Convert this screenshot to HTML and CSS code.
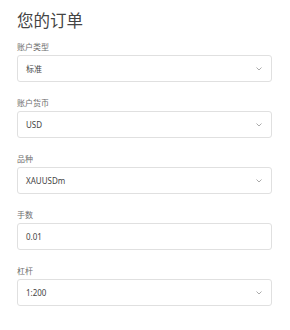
FILE: index.html
```html
<!DOCTYPE html>
<html>
    <head>
        <title>您的订单</title>
        <link rel="stylesheet" href="styles.css">
    </head>
    <body>
        <main class="order">
            <h1 class="title">您的订单</h1>
            <div class="field">
                <p class="label">账户类型</p>
                <div class="box">
                    <span class="value">标准</span>
                    <svg class="chevron" viewBox="0 0 6 4"><path d="M0.5 0.5 L3 3 L5.5 0.5"/></svg>
                </div>
            </div>
            <div class="field">
                <p class="label">账户货币</p>
                <div class="box">
                    <span class="value">USD</span>
                    <svg class="chevron" viewBox="0 0 6 4"><path d="M0.5 0.5 L3 3 L5.5 0.5"/></svg>
                </div>
            </div>
            <div class="field">
                <p class="label">品种</p>
                <div class="box">
                    <span class="value">XAUUSDm</span>
                    <svg class="chevron" viewBox="0 0 6 4"><path d="M0.5 0.5 L3 3 L5.5 0.5"/></svg>
                </div>
            </div>
            <div class="field">
                <p class="label">手数</p>
                <div class="box">
                    <span class="value">0.01</span>
                </div>
            </div>
            <div class="field">
                <p class="label">杠杆</p>
                <div class="box">
                    <span class="value">1:200</span>
                    <svg class="chevron" viewBox="0 0 6 4"><path d="M0.5 0.5 L3 3 L5.5 0.5"/></svg>
                </div>
            </div>
        </main>
    </body>
</html>
```

FILE: styles.css
```css
body{
    margin: 0;
    background-color: white;
    font-family: "Noto Sans", "Noto Sans CJK SC", sans-serif;
}
.order{
    padding: 8px 18px 0px 17px;

    display: flex;
    flex-direction: column;
}
.title{
    margin: 0px;
    font-size: 16.5px;
    line-height: 25px;
    font-weight: 400;
    color: rgb(68, 68, 68);
}
.field{
    display: flex;
    flex-direction: column;
    margin-top: 15px;
}
.title + .field{
    margin-top: 8px;
}
.label{
    margin: 0px 0px 2px 0px;
    font-size: 8px;
    line-height: 12px;
    color: rgb(110, 110, 110);
}
.box{
    height: 27px;
    box-sizing: border-box;
    border: 1px solid rgb(224, 224, 224);
    border-radius: 3px;
    padding: 0px 9px 0px 8px;

    display: flex;
    align-items: center;
    justify-content: space-between;
}
.value{
    font-size: 8px;
    color: rgb(68, 68, 68);
}
.chevron{
    width: 6px;
    height: 4px;
    fill: none;
    stroke: rgb(150, 150, 150);
    stroke-width: 0.8;
}
```
